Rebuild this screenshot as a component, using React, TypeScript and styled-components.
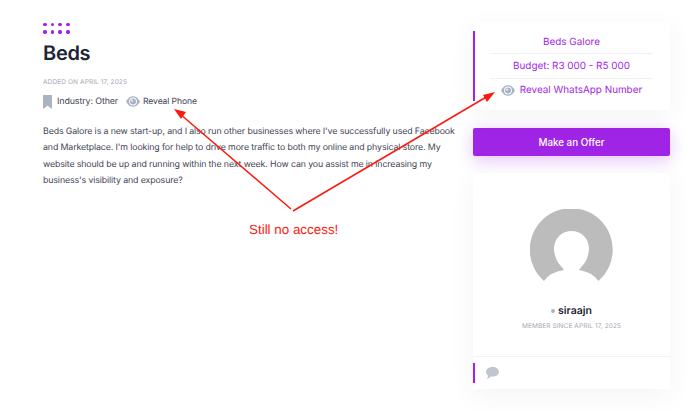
import styled, { createGlobalStyle } from "styled-components";

const GlobalStyle = createGlobalStyle`
  html, body {
    margin: 0;
    padding: 0;
    background: #fff;
    font-family: "Inter", "Liberation Sans", sans-serif;
    text-rendering: geometricPrecision;
  }
`;

const EyeIcon = () => (
  <svg width="14" height="11" viewBox="0 0 14 11">
    <path
      fill="#aab3c4"
      fillRule="evenodd"
      d="M0 5.500C1.800 2 4.200.3 7 .3s5.200 1.700 7 5.200c-1.800 3.500-4.200 5.200-7 5.200S1.800 9 0 5.500ZM7 1.600a3.900 3.900 0 1 0 0 7.800 3.900 3.900 0 0 0 0-7.800Z"
    />
    <circle cx="7" cy="5.500" r="3" fill="#aab3c4" />
    <circle cx="6" cy="4.600" r="1.200" fill="#e6e9ef" />
  </svg>
);

export default function App() {
  return (
    <Page>
      <GlobalStyle />
      <Main>
        <Dots>
          {Array.from({ length: 8 }).map((_, i) => (
            <Dot key={i} />
          ))}
        </Dots>
        <Title>Beds</Title>
        <Added>ADDED ON APRIL 17, 2025</Added>
        <MetaRow>
          <svg width="9" height="14" viewBox="0 0 9 14">
            <path fill="#aab3c4" d="M0 0h9v14L4.500 10.800 0 14Z" />
          </svg>
          <MetaText>Industry: Other</MetaText>
          <RevealGroup>
            <EyeIcon />
            <RevealText>Reveal Phone</RevealText>
          </RevealGroup>
        </MetaRow>
        <Description>
          Beds Galore is a new start-up, and I also run other businesses where I've successfully used Facebook and
          Marketplace. I'm looking for help to drive more traffic to both my online and physical store. My website
          should be up and running within the next week. How can you assist me in increasing my business's visibility
          and exposure?
        </Description>
      </Main>

      <Sidebar>
        <InfoCard>
          <InfoRow>Beds Galore</InfoRow>
          <InfoRow>Budget: R3 000 - R5 000</InfoRow>
          <InfoRow>
            <EyeIcon />
            Reveal WhatsApp Number
          </InfoRow>
        </InfoCard>
        <OfferButton>Make an Offer</OfferButton>
        <ProfileCard>
          <ProfileBody>
            <svg width="83" height="73" viewBox="0 0 83 73">
              <path
                fill="#bcbcbc"
                fillRule="evenodd"
                d="M14 72A41.500 41.500 0 1 1 68.500 72Q62 63 49 61Q51 58 53 56C56 53 59 46 59 39.500A17.500 17.500 0 1 0 24 39.500C24 46 27 53 30 56Q32 58 34 61Q20 63 14 72Z"
              />
            </svg>
            <UserName>
              <StatusDot />
              siraajn
            </UserName>
            <MemberSince>MEMBER SINCE APRIL 17, 2025</MemberSince>
          </ProfileBody>
          <ProfileFooter>
            <svg width="13" height="12" viewBox="0 0 13 12">
              <path
                fill="#c0c5cf"
                d="M6.800 0C10.200 0 13 2.100 13 4.800S10.200 9.600 6.800 9.600c-.7 0-1.300-.1-1.900-.2C3.900 10.600 2.300 11.400.5 11.600 1.500 10.700 2 9.700 2.100 8.500.8 7.600 0 6.300 0 4.800 0 2.100 3.100 0 6.800 0Z"
              />
            </svg>
          </ProfileFooter>
        </ProfileCard>
      </Sidebar>

      <Annotation width="690" height="410" viewBox="0 0 690 410">
        <path fill="none" stroke="#fb1a10" strokeWidth="1.5" d="M291 209 180 114" />
        <path fill="#fb1a10" d="m174 109 12 3-5 7Z" />
        <path fill="none" stroke="#fb1a10" strokeWidth="1.5" d="M293 211 488 96" />
        <path fill="#fb1a10" d="m495 92-8 10-4-7Z" />
      </Annotation>
      <AnnotationLabel>Still no access!</AnnotationLabel>
    </Page>
  );
}

const Page = styled.div`
  position: relative;
  display: flex;
  gap: 16px;
  box-sizing: border-box;
  width: 690px;
  height: 410px;
  padding: 22.500px 20px 0 43px;
  overflow: hidden;
  background: #fff;
`;

const Main = styled.main`
  flex: 1;
  min-width: 0;
`;

const Dots = styled.div`
  display: grid;
  grid-template-columns: repeat(4, 3.500px);
  gap: 4.200px;
`;

const Dot = styled.span`
  width: 3.500px;
  height: 3.500px;
  border-radius: 50%;
  background: #a21ff0;
`;

const Title = styled.h1`
  margin: 6px 0 0;
  font-size: 20px;
  line-height: 26px;
  font-weight: 600;
  letter-spacing: -0.3px;
  color: #1e2335;
`;

const Added = styled.div`
  margin-top: 11px;
  font-size: 6.500px;
  line-height: 10px;
  letter-spacing: 0.12px;
  color: #a3a7b2;
`;

const MetaRow = styled.div`
  display: flex;
  align-items: center;
  margin-top: 8px;
  height: 14px;
  gap: 5px;
`;

const MetaText = styled.span`
  font-size: 8.900px;
  letter-spacing: -0.12px;
  color: #3f4454;
`;

const RevealText = styled(MetaText)`
  font-size: 8.600px;
`;

const RevealGroup = styled.span`
  display: flex;
  align-items: center;
  gap: 3px;
  margin-left: 3px;
`;

const Description = styled.p`
  margin: 15px 0 0;
  font-size: 8.800px;
  line-height: 16.600px;
  letter-spacing: -0.12px;
  color: #3f4454;
`;

const Sidebar = styled.aside`
  display: flex;
  flex-direction: column;
  width: 197px;
  flex-shrink: 0;
  padding-top: 0.500px;
`;

const InfoCard = styled.section`
  position: relative;
  display: flex;
  flex-direction: column;
  padding: 7px 17px 8px;
  height: 87px;
  box-sizing: border-box;
  background: #fff;
  box-shadow: 0 6px 24px rgba(60, 70, 110, 0.06);

  &::before {
    content: "";
    position: absolute;
    left: 0;
    top: 8px;
    bottom: 9px;
    width: 2px;
    background: #a21ff0;
  }
`;

const InfoRow = styled.div`
  display: flex;
  align-items: center;
  justify-content: center;
  gap: 5px;
  height: 24px;
  font-size: 9.900px;
  color: #a126e8;
  border-bottom: 1px solid #f1f2f5;

  &:last-child {
    border-bottom: none;
  }
`;

const OfferButton = styled.button`
  margin-top: 18px;
  height: 28px;
  border: none;
  border-radius: 2px;
  background: #a024e6;
  color: #fff;
  font-family: inherit;
  font-size: 9.800px;
  font-weight: 500;
  box-shadow: 0 4px 16px rgba(160, 36, 230, 0.28);
`;

const ProfileCard = styled.section`
  display: flex;
  flex-direction: column;
  margin-top: 17px;
  height: 216px;
  background: #fff;
  box-shadow: 0 6px 24px rgba(60, 70, 110, 0.06);
`;

const ProfileBody = styled.div`
  flex: 1;
  display: flex;
  flex-direction: column;
  align-items: center;
  padding-top: 36px;
  border-bottom: 1px solid #f1f2f5;
`;

const UserName = styled.div`
  display: flex;
  align-items: center;
  gap: 3px;
  margin-top: 22px;
  font-size: 10.500px;
  line-height: 14px;
  font-weight: 600;
  color: #1e2335;
`;

const StatusDot = styled.span`
  width: 4px;
  height: 4px;
  border-radius: 50%;
  background: #aab3c4;
`;

const MemberSince = styled.div`
  margin-top: 3px;
  font-size: 6.500px;
  line-height: 10px;
  letter-spacing: 0.1px;
  color: #a3a7b2;
`;

const ProfileFooter = styled.div`
  position: relative;
  display: flex;
  align-items: center;
  height: 32px;
  padding-left: 13px;

  &::before {
    content: "";
    position: absolute;
    left: 0;
    top: 6px;
    bottom: 6px;
    width: 2px;
    background: #a21ff0;
  }
`;

const Annotation = styled.svg`
  position: absolute;
  left: 0;
  top: 0;
  pointer-events: none;
`;

const AnnotationLabel = styled.div`
  position: absolute;
  left: 249px;
  top: 221px;
  font-family: "Liberation Sans", Arial, sans-serif;
  font-size: 13.400px;
  line-height: 17px;
  color: #fb1a10;
`;
